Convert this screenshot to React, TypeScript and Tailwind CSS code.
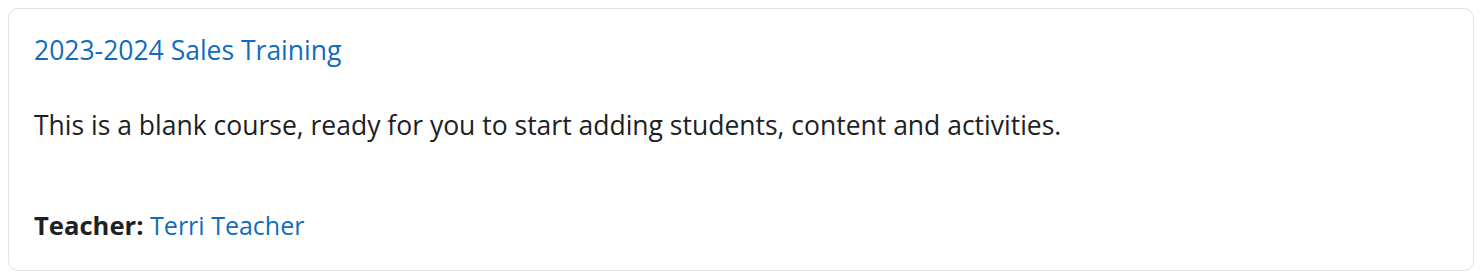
import React from 'react';

const App = () => {
  return (
    <div className="bg-white p-2 font-['Open_Sans',sans-serif] text-[#1d2125]">
      <div className="h-[263px] rounded-[10px] border border-[#dee2e6] px-[25px] pt-[23px]">
        <a href="#" className="block text-[26.5px] leading-[36px] text-[#0f6cbf]">
          2023-2024 Sales Training
        </a>
        <p className="mt-[39px] text-[26.5px] leading-[36px]">
          This is a blank course, ready for you to start adding students, content and activities.
        </p>
        <p className="mt-[64px] text-[25.6px] leading-[36px]">
          <span className="font-bold">Teacher:</span>{' '}
          <a href="#" className="text-[25px] text-[#0f6cbf]">Terri Teacher</a>
        </p>
      </div>
    </div>
  );
};

export default App;
